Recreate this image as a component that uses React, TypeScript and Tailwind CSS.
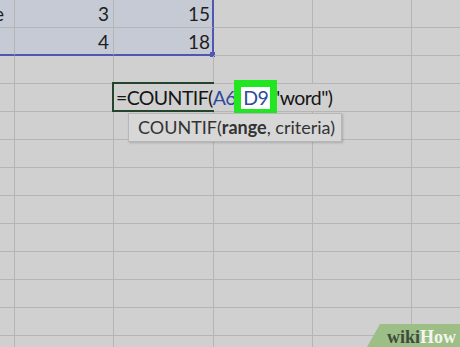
import React from "react";

const widths = ["w-[99px]", "w-[99px]", "w-[100px]", "w-[99px]", "w-[99px]", "w-[99px]"];
const base = "h-[28px] shrink-0 border-r border-b border-[#b5b5b5] flex items-center relative";

function Row({ r }: { r: number }) {
  const sel = r === 0 || r === 1;
  return (
    <div className="flex">
      {widths.map((w, c) => {
        let cls = `${base} ${w}`;
        if (sel && c <= 2) cls += " bg-[#c5cad4]";
        if (sel && c === 2) cls += " border-r-2 border-r-[#4f57b3]";
        if (r === 1 && c <= 2) cls += " border-b-2 border-b-[#4f57b3]";
        let content: React.ReactNode = null;
        if (r === 0 && c === 0) content = <span className="ml-auto pr-[10px]">Apple</span>;
        if (r === 0 && c === 1) content = <span className="ml-auto pr-[4px]">3</span>;
        if (r === 0 && c === 2) content = <span className="ml-auto pr-[2px]">15</span>;
        if (r === 1 && c === 1) content = <span className="ml-auto pr-[4px]">4</span>;
        if (r === 1 && c === 2)
          content = (
            <>
              <span className="ml-auto pr-[2px]">18</span>
              <span className="absolute -right-[3px] -bottom-[3px] w-[5px] h-[5px] bg-[#4f57b3]" />
            </>
          );
        return (
          <div key={c} className={cls}>
            {content}
          </div>
        );
      })}
    </div>
  );
}

function FormulaRow() {
  return (
    <div className="flex">
      <div className={`${base} w-[99px]`} />
      <div className={`${base} w-[99px]`} />
      <div className={`${base} w-[298px] border-r border-b z-10`}>
        <span className="absolute -top-[2px] -left-[2px] w-[102px] h-[30px] border-2 border-r-0 border-[#24452c]" />
        <div className="relative flex items-center h-[27px] pl-[2px] whitespace-nowrap text-[19.5px] tracking-[-0.6px]">
          <span className="text-[#151515]">=COUNTIF(</span>
          <span className="text-[#2d4c9c]">A6</span>
          <span className="relative z-10 -ml-[2px] -mr-[4px] flex items-center h-[35px] px-[3px] bg-[#22e622]">
            <span className="text-[#22e622]">:</span>
            <span className="bg-white text-[#2d4c9c] leading-[22px] px-[2px]">D9</span>
            <span className="text-[#22e622]">,</span>
          </span>
          <span className="text-[#151515]">"word")</span>
        </div>
      </div>
      <div className={`${base} w-[99px]`} />
    </div>
  );
}

export default function App() {
  const rows = Array.from({ length: 13 }, (_, i) => i);
  return (
    <div
      className="relative w-[460px] h-[347px] overflow-hidden bg-[#d0d0d0] text-[19px] leading-[27px] text-[#1e1e1e]"
      style={{ fontFamily: "Lato, 'Noto Sans', sans-serif" }}
    >
      <div className="flex flex-col -ml-[84px]">
        {rows.map((r) => (r === 3 ? <FormulaRow key={r} /> : <Row key={r} r={r} />))}
      </div>

      <div className="absolute left-[128px] top-[113px] w-[214px] h-[29px] z-20 bg-[#d7d7d7] border border-[#b7b7b7] shadow-[1px_1px_2px_rgba(0,0,0,0.18)] flex items-center pl-[9px] text-[18px] text-[#333333] whitespace-nowrap">
        COUNTIF(<b className="font-bold">range</b>, criteria)
      </div>

      <div className="absolute right-0 bottom-0 w-[93px] h-[23px] z-20 bg-[#9dbe87] [clip-path:polygon(13px_0,100%_0,100%_100%,0_100%)] flex items-end justify-end pr-[4px]">
        <span
          className="text-[18px] leading-[20px] font-bold"
          style={{ fontFamily: "'Liberation Serif', serif" }}
        >
          <span className="text-[#3e4b3a]">wiki</span>
          <span className="text-[#f2f6ee]">How</span>
        </span>
      </div>
    </div>
  );
}
